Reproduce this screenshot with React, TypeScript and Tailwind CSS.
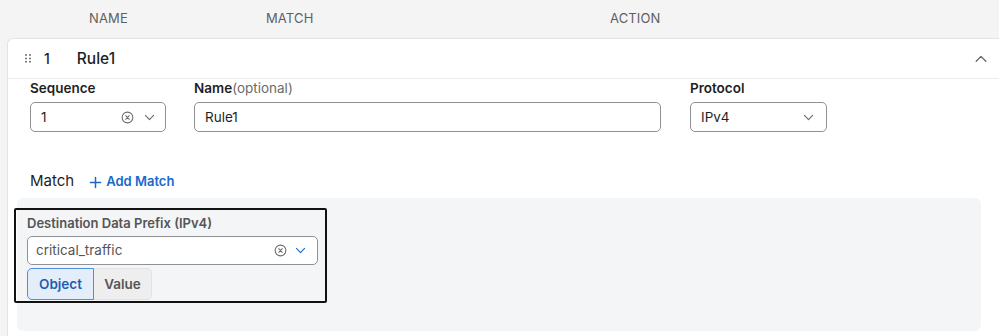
import React from 'react';

const ClearIcon = ({ className = '' }: { className?: string }) => (
  <svg width="13" height="13" viewBox="0 0 16 16" fill="none" className={className}>
    <circle cx="8" cy="8" r="6.6" stroke="currentColor" strokeWidth="1.3" />
    <path d="M5.8 5.8l4.4 4.4M10.2 5.8l-4.4 4.4" stroke="currentColor" strokeWidth="1.3" strokeLinecap="round" />
  </svg>
);

const ChevronDown = ({ className = '' }: { className?: string }) => (
  <svg width="13" height="13" viewBox="0 0 16 16" fill="none" className={className}>
    <path d="M3 5.5l5 5 5-5" stroke="currentColor" strokeWidth="1.4" strokeLinecap="round" strokeLinejoin="round" />
  </svg>
);

const ChevronUp = () => (
  <svg width="14" height="14" viewBox="0 0 16 16" fill="none" className="text-[#666]">
    <path d="M2.5 10.5l5.5-5.5 5.5 5.5" stroke="currentColor" strokeWidth="1.5" strokeLinecap="round" strokeLinejoin="round" />
  </svg>
);

const Grip = () => (
  <svg width="7" height="9" viewBox="0 0 7 9" className="text-[#666]">
    {[0, 1].map((c) =>
      [0, 1, 2].map((r) => <circle key={`${c}-${r}`} cx={1 + c * 4} cy={1 + r * 3.4} r="0.95" fill="currentColor" />)
    )}
  </svg>
);

export default function App() {
  return (
    <div className="w-[999px] h-[336px] overflow-hidden bg-[#f4f4f5] font-['Inter',sans-serif] text-[#1f1f1f]">
      {/* table header */}
      <div className="h-[36px] pt-[1px] flex items-center pl-[89px] text-[13px] text-[#5f5f5f] tracking-[0.01em]">
        <div className="w-[177px]">NAME</div>
        <div className="w-[344px]">MATCH</div>
        <div>ACTION</div>
      </div>

      {/* rule card */}
      <div className="mt-[2px] ml-[7px] w-[1000px] h-[320px] bg-white border border-r-0 border-[#e3e3e3] rounded-tl-[6px]">
        <div className="h-[40px] flex items-center border-b border-[#ebebeb] pl-[17px] pr-[19px]">
          <Grip />
          <span className="ml-[12px] text-[14px] font-medium">1</span>
          <span className="ml-[27px] text-[15.5px] font-medium">Rule1</span>
          <div className="ml-auto">
            <ChevronUp />
          </div>
        </div>

        <div className="pl-[22px]">
          <div className="flex items-start">
            <div className="w-[136px]">
              <div className="text-[13.5px] font-semibold h-[23px] leading-[18px]">Sequence</div>
              <div className="h-[30px] border-[1.5px] border-[#8e9297] rounded-[5px] flex items-center pl-[10px] pr-[9px] text-[13.5px]">
                <span>1</span>
                <ClearIcon className="ml-auto text-[#6b6b6b]" />
                <ChevronDown className="ml-[9px] text-[#6b6b6b]" />
              </div>
            </div>
            <div className="w-[467px] ml-[28px]">
              <div className="text-[13.5px] h-[23px] leading-[18px]">
                <span className="font-semibold">Name</span>
                <span className="text-[#6b6b6b]">(optional)</span>
              </div>
              <div className="h-[30px] border-[1.5px] border-[#8e9297] rounded-[5px] flex items-center pl-[10px] text-[13.5px]">
                Rule1
              </div>
            </div>
            <div className="w-[137px] ml-[29px]">
              <div className="text-[13.5px] font-semibold h-[23px] leading-[18px]">Protocol</div>
              <div className="h-[30px] border-[1.5px] border-[#8e9297] rounded-[5px] flex items-center pl-[10px] pr-[11px] text-[13.5px]">
                <span>IPv4</span>
                <ChevronDown className="ml-auto text-[#6b6b6b]" />
              </div>
            </div>
          </div>

          <div className="flex items-center mt-[37px] h-[24px]">
            <span className="text-[15px]">Match</span>
            <span className="ml-[15px] mt-[2px] flex items-center text-[13px] font-semibold text-[#1b68c9]">
              <svg width="13" height="13" viewBox="0 0 14 14" className="mr-[4px]">
                <path d="M7 1.5v11M1.5 7h11" stroke="currentColor" strokeWidth="1.6" strokeLinecap="round" />
              </svg>
              Add Match
            </span>
          </div>
        </div>

        {/* match panel */}
        <div className="ml-[9px] mt-[5px] w-[964px] h-[133px] bg-[#f4f5f7] rounded-[6px] pt-[10px]">
          <div className="-ml-[3px] w-[313px] h-[95px] border-2 border-[#111] rounded-[2px] pl-[11px] pr-[7px] pt-[3px]">
            <div className="text-[13px] font-semibold text-[#555] h-[20px] leading-[20px]">
              Destination Data Prefix (IPv4)
            </div>
            <div className="mt-[3px] h-[29px] bg-white border-[1.5px] border-[#8e9297] rounded-[5px] flex items-center pl-[8px] pr-[10px] text-[13.5px] text-[#555]">
              <span>critical_traffic</span>
              <ClearIcon className="ml-auto text-[#6b6b6b]" />
              <ChevronDown className="ml-[7px] text-[#1b68c9]" />
            </div>
            <div className="mt-[3px] flex h-[32px] text-[13.5px] font-semibold">
              <div className="w-[67px] flex items-center justify-center bg-[#e4eefb] border-[1.5px] border-[#4b8fe0] rounded-l-[5px] text-[#1b5fb4]">
                Object
              </div>
              <div className="w-[58px] flex items-center justify-center bg-[#eeeeef] border-[1.5px] border-l-0 border-[#e2e2e3] rounded-r-[5px] text-[#555]">
                Value
              </div>
            </div>
          </div>
        </div>
      </div>
    </div>
  );
}
